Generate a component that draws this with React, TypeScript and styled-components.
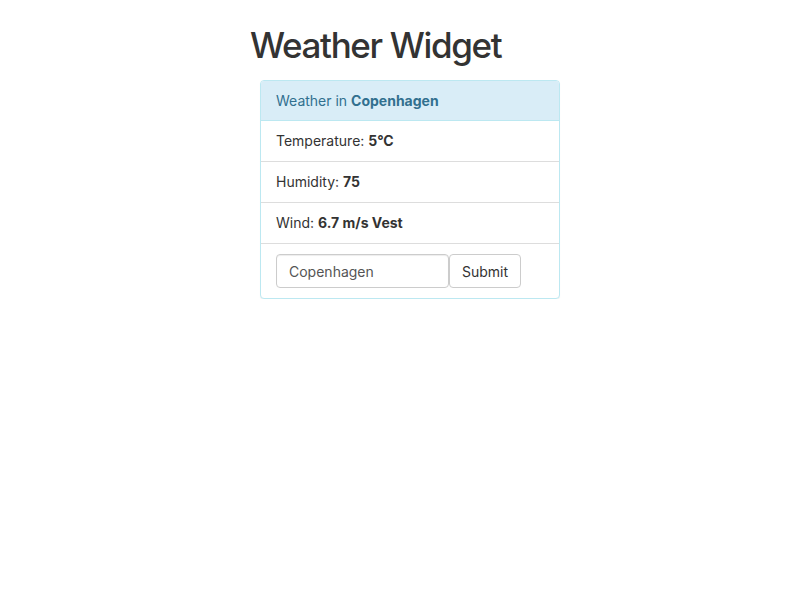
import React, { useState } from 'react';
import styled, { createGlobalStyle } from 'styled-components';

const GlobalStyle = createGlobalStyle`
  body {
    margin: 0;
    font-family: Inter, "Helvetica Neue", "Liberation Sans", sans-serif;
    font-size: 14px;
    line-height: 1.42857;
    color: #333;
    background: #fff;
  }
`;

const Page = styled.div`
  width: 300px;
  margin: 0 auto;
`;

const Heading = styled.h1`
  margin: 26px 0 15px 0;
  font-size: 35px;
  font-weight: 500;
  line-height: 1.1;
  letter-spacing: -1.35px;
  white-space: nowrap;
  color: #333;
`;

const Panel = styled.div`
  width: 300px;
  margin-left: 10px;
  box-sizing: border-box;
  border: 1px solid #bce8f1;
  border-radius: 4px;
  background: #fff;
  box-shadow: 0 1px 1px rgba(0, 0, 0, 0.05);
`;

const PanelHeading = styled.div`
  padding: 10px 15px;
  background: #d9edf7;
  color: #31708f;
  border-bottom: 1px solid #bce8f1;
  border-radius: 3px 3px 0 0;
`;

const Item = styled.div`
  padding: 10px 15px;
  border-bottom: 1px solid #ddd;
`;

const Form = styled.form`
  display: flex;
  padding: 10px 15px;
`;

const Input = styled.input`
  width: 173px;
  height: 34px;
  box-sizing: border-box;
  padding: 6px 12px;
  font-family: inherit;
  font-size: 14px;
  color: #555;
  border: 1px solid #ccc;
  border-radius: 4px;
  box-shadow: inset 0 1px 1px rgba(0, 0, 0, 0.075);
  outline: none;
`;

const Button = styled.button`
  height: 34px;
  padding: 6px 12px;
  font-family: inherit;
  font-size: 14px;
  color: #333;
  background: #fff;
  border: 1px solid #ccc;
  border-radius: 4px;
  cursor: pointer;
`;

export default function App() {
  const [city, setCity] = useState('Copenhagen');
  return (
    <>
      <GlobalStyle />
      <Page>
        <Heading>Weather Widget</Heading>
        <Panel>
          <PanelHeading>
            Weather in <b>Copenhagen</b>
          </PanelHeading>
          <Item>
            Temperature: <b>5°C</b>
          </Item>
          <Item>
            Humidity: <b>75</b>
          </Item>
          <Item>
            Wind: <b>6.7 m/s Vest</b>
          </Item>
          <Form onSubmit={(e) => e.preventDefault()}>
            <Input value={city} onChange={(e) => setCity(e.target.value)} />
            <Button type="submit">Submit</Button>
          </Form>
        </Panel>
      </Page>
    </>
  );
}
